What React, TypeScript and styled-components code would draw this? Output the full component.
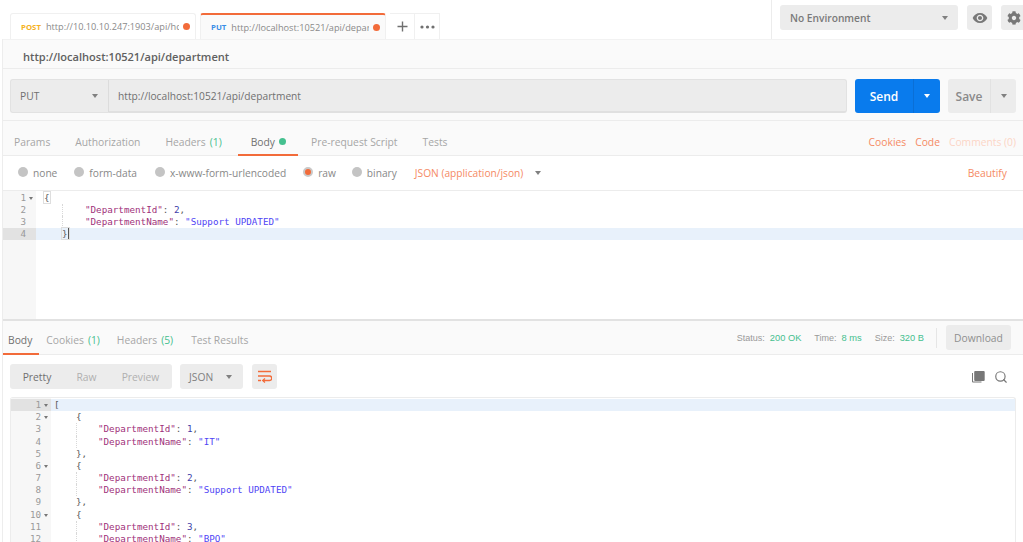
import React from "react";
import styled, { createGlobalStyle } from "styled-components";
import { FaCog } from "react-icons/fa";
import { MdVisibility } from "react-icons/md";
import { Search } from "lucide-react";

const GlobalStyle = createGlobalStyle`
  html, body { margin: 0; padding: 0; background: #fff; }
  * { box-sizing: border-box; }
`;

const Page = styled.div`
  width: 1023px;
  height: 542px;
  overflow: hidden;
  font-family: "Open Sans", sans-serif;
  font-size: 10.3px;
  color: #808080;
  background: #fff;
`;

// top strip with request tabs
const TabStrip = styled.div`
  height: 39px;
  display: flex;
  align-items: flex-end;
  padding-left: 10px;
`;

const ReqTab = styled.div<{ $active?: boolean }>`
  width: 186px;
  height: 26px;
  margin-right: 4px;
  display: flex;
  align-items: center;
  padding: 0 5px 0 10px;
  background: ${(p) => (p.$active ? "#fafafa" : "#fff")};
  border: 1px solid #f0f0f0;
  border-bottom: none;
  border-top: ${(p) => (p.$active ? "2px solid #f26b3a" : "1px solid #f0f0f0")};
  border-radius: 3px 3px 0 0;
  white-space: nowrap;
`;

const Verb = styled.span<{ $color: string }>`
  color: ${(p) => p.$color};
  font-size: 7.8px;
  font-weight: 700;
  margin-right: 5px;
`;

const TabUrl = styled.span`
  flex: 1;
  min-width: 0;
  overflow: hidden;
  font-size: 9.2px;
  color: #8a8a8a;
`;

const Dot = styled.span<{ $color?: string }>`
  width: 7px;
  height: 7px;
  margin-left: 4px;
  border-radius: 50%;
  background: ${(p) => p.$color || "#f26b3a"};
  flex: none;
`;

const SmallTab = styled.div`
  width: 25px;
  height: 26px;
  display: flex;
  align-items: center;
  justify-content: center;
  border: 1px solid #f0f0f0;
  border-bottom: none;
  border-left-width: 0;
  color: #707070;
  &:first-of-type {
    border-left-width: 1px;
  }
`;

const EnvArea = styled.div`
  margin-left: auto;
  align-self: stretch;
  width: 252px;
  flex: none;
  border-left: 1px solid #ececec;
  display: flex;
  align-items: flex-start;
  padding: 5px 0 0 8px;
  gap: 9px;
  overflow: hidden;
`;

const EnvSelect = styled.div`
  width: 178px;
  height: 25px;
  flex: none;
  background: #ececec;
  border-radius: 3px;
  display: flex;
  align-items: center;
  justify-content: space-between;
  padding: 0 10px;
  font-size: 10.2px;
  font-weight: 600;
  color: #7a7a7a;
`;

const IconButton = styled.div`
  width: 25px;
  height: 25px;
  flex: none;
  background: #ececec;
  border-radius: 3px;
  display: flex;
  align-items: center;
  justify-content: center;
  color: #787878;
`;

const Caret = styled.span<{ $color?: string }>`
  width: 0;
  height: 0;
  flex: none;
  border-left: 3.5px solid transparent;
  border-right: 3.5px solid transparent;
  border-top: 4px solid ${(p) => p.$color || "#808080"};
`;

const SmallCaret = styled.span`
  width: 0;
  height: 0;
  display: inline-block;
  border-left: 2.5px solid transparent;
  border-right: 2.5px solid transparent;
  border-top: 3px solid #777;
  margin-left: 3px;
  vertical-align: 1px;
`;

// everything under the strip
const Panel = styled.div`
  margin-left: 2px;
  border-left: 1px solid #ededed;
`;

const TitleBar = styled.div`
  height: 30px;
  background: #fafafa;
  border-top: 1px solid #f2f2f2;
  border-bottom: 1px solid #ececec;
  display: flex;
  align-items: center;
  padding: 4px 0 0 20px;
  font-size: 11.05px;
  font-weight: 600;
  color: #606060;
`;

const UrlRow = styled.div`
  height: 52px;
  background: #fafafa;
  border-bottom: 1px solid #ececec;
  display: flex;
  align-items: flex-start;
  padding: 10px 0 0 7px;
`;

const MethodBox = styled.div`
  width: 99px;
  height: 34px;
  flex: none;
  background: #ececec;
  border: 1px solid #e2e2e2;
  border-right: 1px solid #dcdcdc;
  border-radius: 3px 0 0 3px;
  display: flex;
  align-items: center;
  justify-content: space-between;
  padding: 0 10px 0 9px;
  font-size: 10.3px;
  color: #707070;
`;

const UrlInput = styled.div`
  width: 738px;
  height: 34px;
  flex: none;
  background: #ececec;
  border: 1px solid #e2e2e2;
  border-left: none;
  border-bottom: 2px solid #e0e0e0;
  border-radius: 0 3px 3px 0;
  display: flex;
  align-items: center;
  padding-left: 9px;
  font-size: 10.2px;
  color: #707070;
`;

const SendGroup = styled.div`
  width: 85px;
  height: 34px;
  margin-left: 8px;
  flex: none;
  display: flex;
  border-radius: 3px;
  overflow: hidden;
  background: #097bed;
  color: #fff;
  font-size: 12px;
  font-weight: 600;
`;

const SendLabel = styled.div`
  width: 58px;
  display: flex;
  align-items: center;
  justify-content: center;
`;

const SplitCaret = styled.div<{ $line: string }>`
  flex: 1;
  display: flex;
  align-items: center;
  justify-content: center;
  border-left: 1px solid ${(p) => p.$line};
`;

const SaveGroup = styled.div`
  width: 68px;
  height: 34px;
  margin-left: 8px;
  flex: none;
  display: flex;
  border-radius: 3px;
  overflow: hidden;
  background: #ececec;
  color: #8a8a8a;
  font-size: 12px;
  font-weight: 600;
`;

const SaveLabel = styled.div`
  width: 42px;
  display: flex;
  align-items: center;
  justify-content: center;
`;

const TabsRow = styled.div<{ $height: number; $first?: number; $textTop: number }>`
  --text-top: ${(p) => p.$textTop}px;
  height: ${(p) => p.$height}px;
  padding-left: ${(p) => p.$first ?? 0}px;
  background: #fafafa;
  border-bottom: 1px solid #ececec;
  display: flex;
  align-items: stretch;
`;

const NavTab = styled.div<{ $active?: boolean; $gap?: number; $left?: number; $right?: number }>`
  display: flex;
  align-items: center;
  padding: var(--text-top) ${(p) => p.$right ?? 0}px 0 ${(p) => p.$left ?? 0}px;
  margin-right: ${(p) => p.$gap ?? 25}px;
  white-space: nowrap;
  color: ${(p) => (p.$active ? "#707070" : "#a6a6a6")};
  border-bottom: 2px solid ${(p) => (p.$active ? "#f26b3a" : "transparent")};
  margin-bottom: -1px;
`;

const Count = styled.span`
  color: #45c08f;
  margin-left: 4px;
`;

const LinksRight = styled.div`
  margin-left: auto;
  display: flex;
  align-items: center;
  gap: 9px;
  padding: var(--text-top) 7px 0 0;
`;

const OrangeLink = styled.span<{ $faded?: boolean }>`
  color: ${(p) => (p.$faded ? "#fcd5c6" : "#f58a64")};
`;

const BodyTypes = styled.div`
  height: 35px;
  display: flex;
  align-items: center;
  padding-left: 15px;
  border-bottom: 1px solid #ececec;
  background: #fff;
  font-size: 10.2px;
`;

const RadioItem = styled.label<{ $gap: number }>`
  display: flex;
  align-items: center;
  margin-right: ${(p) => p.$gap}px;
  color: #888;
`;

const Radio = styled.span<{ $on?: boolean }>`
  width: 10px;
  height: 10px;
  margin: -3px 5px 0 0;
  border-radius: 50%;
  background: ${(p) => (p.$on ? "#f26b3a" : "#c4c4c4")};
  border: ${(p) => (p.$on ? "2px solid #c9c9c9" : "none")};
`;

const FormatText = styled.span`
  color: #f58a64;
  margin-right: 12px;
`;

const Beautify = styled.span`
  margin-left: auto;
  margin-right: 16px;
  color: #f58a64;
  font-size: 10.3px;
`;

const Code = styled.div<{ $height: number }>`
  height: ${(p) => p.$height}px;
  display: flex;
  overflow: hidden;
  font-family: "DejaVu Sans Mono", monospace;
  font-size: 9.24px;
  position: relative;
`;

const Gutter = styled.div<{ $width: number; $pad: number }>`
  width: ${(p) => p.$width}px;
  flex: none;
  padding-top: ${(p) => p.$pad}px;
  background: #f7f7f7;
  color: #999;
`;

const Num = styled.div<{ $active?: boolean; $lh: number; $right: number }>`
  height: ${(p) => p.$lh}px;
  line-height: ${(p) => p.$lh}px;
  text-align: right;
  white-space: nowrap;
  padding-right: ${(p) => p.$right}px;
  background: ${(p) => (p.$active ? "#e2e2e2" : "transparent")};
`;

const Lines = styled.div<{ $pad: number }>`
  flex: 1;
  min-width: 0;
  padding-top: ${(p) => p.$pad}px;
`;

const Line = styled.div<{ $active?: boolean; $indent: number; $lh: number }>`
  height: ${(p) => p.$lh}px;
  line-height: ${(p) => p.$lh}px;
  padding-left: ${(p) => p.$indent}px;
  white-space: pre;
  color: #5a5a5a;
  position: relative;
  background: ${(p) => (p.$active ? "#e8f1fb" : "transparent")};
`;

const Guide = styled.span<{ $left: number }>`
  position: absolute;
  left: ${(p) => p.$left}px;
  top: 0;
  bottom: 0;
  border-left: 1px dotted #d8d8d8;
`;

const Bracket = styled.span<{ $cursor?: boolean }>`
  outline: 1px solid #dedede;
  border-right: ${(p) => (p.$cursor ? "1px solid #555" : "none")};
`;

const Key = styled.span`
  color: #a0317a;
`;
const Str = styled.span`
  color: #5045f5;
`;
const NumVal = styled.span`
  color: #3d3da8;
`;

const Divider = styled.div`
  height: 2px;
  background: #e2e2e2;
`;

const StatusBar = styled.div`
  margin-left: auto;
  display: flex;
  align-items: center;
  padding-right: 12px;
  font-family: "Liberation Sans", sans-serif;
  font-size: 9px;
  color: #999;
`;

const StatusItem = styled.span`
  margin-right: 13px;
  &:nth-child(3) {
    margin-right: 12px;
  }
`;

const Green = styled.span`
  color: #45c08f;
  margin-left: 5px;
  font-size: 9.3px;
`;

const VLine = styled.span`
  width: 1px;
  height: 20px;
  background: #e6e6e6;
  margin: 0 9px 0 0;
`;

const DownloadBtn = styled.div`
  width: 65px;
  height: 25px;
  display: flex;
  align-items: center;
  justify-content: center;
  background: #ececec;
  border-radius: 3px;
  font-family: "Open Sans", sans-serif;
  font-size: 10.3px;
  color: #8f8f8f;
`;

const ViewBar = styled.div`
  height: 42px;
  display: flex;
  align-items: flex-start;
  padding: 9px 0 0 7px;
`;

const ViewGroup = styled.div`
  width: 162px;
  height: 25px;
  background: #ececec;
  border-radius: 3px;
  display: flex;
  align-items: center;
  color: #b0b0b0;
`;

const ViewMode = styled.span<{ $w: number; $on?: boolean }>`
  width: ${(p) => p.$w}px;
  text-align: center;
  color: ${(p) => (p.$on ? "#707070" : "#b0b0b0")};
`;

const LangSelect = styled.div`
  width: 63px;
  height: 25px;
  margin-left: 8px;
  background: #ececec;
  border-radius: 3px;
  display: flex;
  align-items: center;
  justify-content: space-between;
  padding: 0 11px 0 9px;
  color: #808080;
`;

const WrapBtn = styled.div`
  width: 25px;
  height: 25px;
  margin-left: 9px;
  background: #ececec;
  border-radius: 3px;
  display: flex;
  align-items: center;
  justify-content: center;
`;

const ViewTools = styled.div`
  margin-left: auto;
  display: flex;
  align-items: center;
  gap: 9px;
  height: 25px;
  padding-right: 15px;
  color: #777;
`;

const Viewer = styled.div`
  margin: 0 7px;
  border: 1px solid #ececec;
  border-bottom: none;
  border-radius: 3px 3px 0 0;
`;

const EDITOR_LH = 12;
const VIEW_LH = 12.18;

const editorNums = [1, 2, 3, 4];
const viewerFold = [1, 2, 6, 10];

const Pair = ({ k, v, isNum, comma }: { k: string; v: string; isNum?: boolean; comma?: boolean }) => (
  <>
    <Key>"{k}"</Key>: {isNum ? <NumVal>{v}</NumVal> : <Str>"{v}"</Str>}
    {comma ? "," : ""}
  </>
);

const ViewerPair = ({ id, name }: { id: string; name: string }) => (
  <>
    <Line $lh={VIEW_LH} $indent={47}>
      <Guide $left={25} />
      <Pair k="DepartmentId" v={id} isNum comma />
    </Line>
    <Line $lh={VIEW_LH} $indent={47}>
      <Guide $left={25} />
      <Pair k="DepartmentName" v={name} />
    </Line>
  </>
);

export default function App() {
  return (
    <Page>
      <GlobalStyle />
      <TabStrip>
        <ReqTab>
          <Verb $color="#f5b223">POST</Verb>
          <TabUrl>http://10.10.10.247:1903/api/hc</TabUrl>
          <Dot />
        </ReqTab>
        <ReqTab $active>
          <Verb $color="#3a8ee6">PUT</Verb>
          <TabUrl>http://localhost:10521/api/depar</TabUrl>
          <Dot />
        </ReqTab>
        <SmallTab>
          <svg width="11" height="11" viewBox="0 0 11 11">
            <path d="M5.5 0.5v10M0.5 5.5h10" stroke="#707070" strokeWidth="1.4" />
          </svg>
        </SmallTab>
        <SmallTab>
          <svg width="15" height="4" viewBox="0 0 15 4" fill="#707070">
            <circle cx="2" cy="2" r="1.6" />
            <circle cx="7.5" cy="2" r="1.6" />
            <circle cx="13" cy="2" r="1.6" />
          </svg>
        </SmallTab>
        <EnvArea>
          <EnvSelect>
            No Environment
            <Caret />
          </EnvSelect>
          <IconButton>
            <MdVisibility size={16} />
          </IconButton>
          <IconButton>
            <FaCog size={14} />
          </IconButton>
        </EnvArea>
      </TabStrip>

      <Panel>
        <TitleBar>http://localhost:10521/api/department</TitleBar>
        <UrlRow>
          <MethodBox>
            PUT
            <Caret />
          </MethodBox>
          <UrlInput>http://localhost:10521/api/department</UrlInput>
          <SendGroup>
            <SendLabel>Send</SendLabel>
            <SplitCaret $line="#0a6fd6">
              <Caret $color="#fff" />
            </SplitCaret>
          </SendGroup>
          <SaveGroup>
            <SaveLabel>Save</SaveLabel>
            <SplitCaret $line="#e2e2e2">
              <Caret />
            </SplitCaret>
          </SaveGroup>
        </UrlRow>

        <TabsRow $height={35} $first={11} $textTop={8}>
          <NavTab>Params</NavTab>
          <NavTab>Authorization</NavTab>
          <NavTab $gap={16}>
            Headers <Count>(1)</Count>
          </NavTab>
          <NavTab $active $gap={13} $left={13} $right={12}>
            Body
            <Dot $color="#45c08f" />
          </NavTab>
          <NavTab>Pre-request Script</NavTab>
          <NavTab>Tests</NavTab>
          <LinksRight>
            <OrangeLink>Cookies</OrangeLink>
            <OrangeLink>Code</OrangeLink>
            <OrangeLink $faded>Comments (0)</OrangeLink>
          </LinksRight>
        </TabsRow>

        <BodyTypes>
          <RadioItem $gap={17}>
            <Radio />
            none
          </RadioItem>
          <RadioItem $gap={18}>
            <Radio />
            form-data
          </RadioItem>
          <RadioItem $gap={17}>
            <Radio />
            x-www-form-urlencoded
          </RadioItem>
          <RadioItem $gap={16}>
            <Radio $on />
            raw
          </RadioItem>
          <RadioItem $gap={18}>
            <Radio />
            binary
          </RadioItem>
          <FormatText>JSON (application/json)</FormatText>
          <Caret />
          <Beautify>Beautify</Beautify>
        </BodyTypes>

        <Code $height={128}>
          <Gutter $width={33} $pad={1}>
            {editorNums.map((n) => (
              <Num key={n} $lh={EDITOR_LH} $active={n === 4} $right={n === 1 ? 3 : 10}>
                {n}
                {n === 1 && <SmallCaret />}
              </Num>
            ))}
          </Gutter>
          <Lines $pad={1}>
            <Line $lh={EDITOR_LH} $indent={8}>
              <Bracket>{"{"}</Bracket>
            </Line>
            <Line $lh={EDITOR_LH} $indent={49}>
              <Guide $left={26} />
              <Pair k="DepartmentId" v="2" isNum comma />
            </Line>
            <Line $lh={EDITOR_LH} $indent={49}>
              <Guide $left={26} />
              <Pair k="DepartmentName" v="Support UPDATED" />
            </Line>
            <Line $lh={EDITOR_LH} $indent={26} $active>
              <Bracket $cursor>{"}"}</Bracket>
            </Line>
          </Lines>
        </Code>

        <Divider />

        <TabsRow $height={34} $textTop={6}>
          <NavTab $active $gap={7} $left={5} $right={7}>
            Body
          </NavTab>
          <NavTab $gap={17}>
            Cookies <Count>(1)</Count>
          </NavTab>
          <NavTab $gap={18}>
            Headers <Count>(5)</Count>
          </NavTab>
          <NavTab>Test Results</NavTab>
          <StatusBar>
            <StatusItem>
              Status:<Green>200 OK</Green>
            </StatusItem>
            <StatusItem>
              Time:<Green>8 ms</Green>
            </StatusItem>
            <StatusItem>
              Size:<Green>320 B</Green>
            </StatusItem>
            <VLine />
            <DownloadBtn>Download</DownloadBtn>
          </StatusBar>
        </TabsRow>

        <ViewBar>
          <ViewGroup>
            <ViewMode $w={54} $on>
              Pretty
            </ViewMode>
            <ViewMode $w={45}>Raw</ViewMode>
            <ViewMode $w={63}>Preview</ViewMode>
          </ViewGroup>
          <LangSelect>
            JSON
            <Caret />
          </LangSelect>
          <WrapBtn>
            <svg width="15" height="13" viewBox="0 0 15 13" fill="none" stroke="#f26b3a" strokeWidth="1.3">
              <path d="M1 1.5h13M1 6h11.5a1.8 1.8 0 0 1 0 4.5H6M1 10.5h3" />
              <path d="M8 8.5l-2.3 2 2.3 2" />
            </svg>
          </WrapBtn>
          <ViewTools>
            <svg width="13" height="13" viewBox="0 0 13 13" fill="#777">
              <path d="M0 3h1v8.5h8.5v1H1a1 1 0 0 1-1-1z" />
              <rect x="2.2" y="1" width="10.5" height="10" rx="1" />
            </svg>
            <Search size={14} strokeWidth={2} />
          </ViewTools>
        </ViewBar>

        <Viewer>
          <Code $height={145}>
            <Gutter $width={40} $pad={1}>
              {Array.from({ length: 12 }, (_, i) => i + 1).map((n) => (
                <Num key={n} $lh={VIEW_LH} $active={n === 1} $right={viewerFold.includes(n) ? 3 : 10}>
                  {n}
                  {viewerFold.includes(n) && <SmallCaret />}
                </Num>
              ))}
            </Gutter>
            <Lines $pad={1}>
              <Line $lh={VIEW_LH} $indent={3} $active>
                [
              </Line>
              <Line $lh={VIEW_LH} $indent={25}>
                {"{"}
              </Line>
              <ViewerPair id="1" name="IT" />
              <Line $lh={VIEW_LH} $indent={25}>
                {"},"}
              </Line>
              <Line $lh={VIEW_LH} $indent={25}>
                {"{"}
              </Line>
              <ViewerPair id="2" name="Support UPDATED" />
              <Line $lh={VIEW_LH} $indent={25}>
                {"},"}
              </Line>
              <Line $lh={VIEW_LH} $indent={25}>
                {"{"}
              </Line>
              <ViewerPair id="3" name="BPO" />
            </Lines>
          </Code>
        </Viewer>
      </Panel>
    </Page>
  );
}
